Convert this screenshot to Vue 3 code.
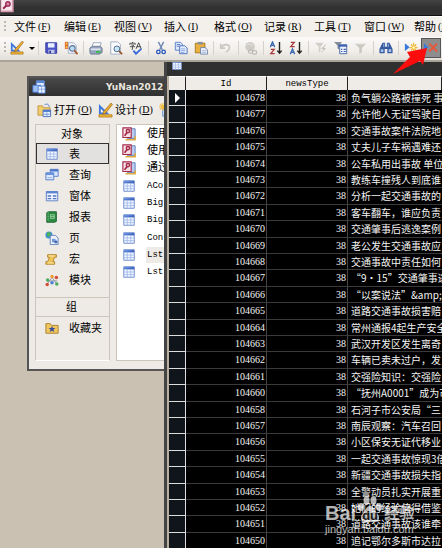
<script setup>
const menus = [
  ['文件', 'F'], ['编辑', 'E'], ['视图', 'V'], ['插入', 'I'], ['格式', 'O'],
  ['记录', 'R'], ['工具', 'T'], ['窗口', 'W'], ['帮助', 'H'],
]
const tools = [
  'save', 'filesearch', '|', 'print', 'preview', 'spell', '|', 'cut', 'copy', 'paste', '|',
  'undo', '|', 'link', '|', 'az', 'za', '|', 'filtersel', 'filterform', 'filter', '|',
  'find', '|', 'newrec', 'delrec',
]
const labels = {
  save: '保存', filesearch: '文件搜索', print: '打印', preview: '打印预览', spell: '拼写检查',
  cut: '剪切', copy: '复制', paste: '粘贴', undo: '撤消', link: '超链接', az: '升序', za: '降序',
  filtersel: '按选定内容筛选', filterform: '按窗体筛选', filter: '应用筛选', find: '查找',
  newrec: '新记录', delrec: '删除记录',
}
const objects = [
  ['table', '表'], ['query', '查询'], ['form', '窗体'], ['report', '报表'],
  ['page', '页'], ['macro', '宏'], ['module', '模块'],
]
const entries = [
  ['wizard', '使用'], ['wizard', '使用'], ['wizard', '通过'],
  ['table', 'ACol'], ['table', 'Bigl'], ['table', 'Bigl'],
  ['table', 'Cons'], ['table', 'Lstl'], ['table', 'Lstl'],
]
const rows = [
  [104678, '负气躺公路被撞死 事'], [104677, '允许他人无证驾驶自'], [104676, '交通事故案件法院地'],
  [104675, '丈夫儿子车祸遇难还'], [104674, '公车私用出事故 单位'], [104673, '教练车撞残人到底谁'],
  [104672, '分析一起交通事故的'], [104671, '客车翻车，谁应负责'], [104670, '交通肇事后逃逸案例'],
  [104669, '老公发生交通事故应'], [104668, '交通事故中责任如何'], [104667, '“9·15”交通肇事逃'],
  [104666, '“以案说法”&amp;n'], [104665, '道路交通事故损害赔'], [104664, '常州通报4起生产安全'],
  [104663, '武汉开发区发生离奇'], [104662, '车辆已卖未过户，发'], [104661, '交强险知识：交强险'],
  [104660, '“抚州A0001”成为市'], [104658, '石河子市公安局“三'], [104657, '南辰观察：汽车召回'],
  [104656, '小区保安无证代移业'], [104655, '一起交通事故惊现3倍'], [104654, '新疆交通事故损失指'],
  [104653, '全警动员扎实开展重'], [104652, '她们的经验值得借鉴'], [104651, '道路交通事故该谁牵'],
  [104650, '追记鄂尔多斯市达拉'],
]
</script>

<template>
  <svg class="defs" aria-hidden="true">
    <defs>
      <linearGradient id="blue" x1="0" y1="0" x2="1" y2="1">
        <stop offset="0" stop-color="#7da4ee" /><stop offset="1" stop-color="#2a4fae" />
      </linearGradient>
      <symbol id="i-design" viewBox="0 0 16 16">
        <path d="M1 1v11h11z" fill="#3f78dc" /><path d="M3 6v4h4z" fill="#f6f2ea" />
        <path d="M14 0l1.500 1.500L8 11l-3 1.500L6 9z" fill="#e8a92c" stroke="#8a5a18" stroke-width=".6" />
        <path d="M1 12.500h14v2.500H1z" fill="#f0b93a" stroke="#a06a10" stroke-width=".7" />
      </symbol>
      <symbol id="i-save" viewBox="0 0 16 16">
        <path d="M2 2h12.500v12H3l-1-1z" fill="#4d52c8" stroke="#30369a" />
        <path d="M4.500 2.500h7.500v5H4.500z" fill="#e6edfb" /><path d="M5 10h7v4H5z" fill="#bfc8e8" /><path d="M6 11h2v3H6z" fill="#30369a" />
      </symbol>
      <symbol id="i-filesearch" viewBox="0 0 16 16">
        <path d="M1 1h4v8H1z" fill="#e0672c" /><path d="M2 2h2v2H2zM2 6h2v2H2z" fill="#f8cf4a" />
        <path d="M5 2h6l3 3v9H5z" fill="#f4f7fd" stroke="#8b9dbf" stroke-width=".8" />
        <circle cx="9.500" cy="8.500" r="3.200" fill="#bcdcf4" stroke="#5c6f8e" stroke-width="1.200" /><path d="M12 11l3.500 4" stroke="#a65a2c" stroke-width="2.200" />
      </symbol>
      <symbol id="i-print" viewBox="0 0 16 16">
        <path d="M5 2h9l-2 6H3z" fill="#fff" stroke="#7889a8" stroke-width=".8" />
        <path d="M1 8l3-2h9l2 2v5l-3 2H2l-1-2z" fill="#96a5bd" stroke="#546582" stroke-width=".8" />
        <path d="M2 8.500h11v2H2z" fill="#dfe6f1" /><path d="M8 11.500h5v2H8z" fill="#36bf44" />
      </symbol>
      <symbol id="i-preview" viewBox="0 0 16 16">
        <path d="M2 1h8l3 3v11H2z" fill="#fbfcff" stroke="#8594ae" stroke-width=".8" />
        <circle cx="9" cy="9" r="3.300" fill="#c9e7f7" stroke="#4e6788" stroke-width="1.100" /><path d="M11.500 11.500L15 15" stroke="#925630" stroke-width="2" />
      </symbol>
      <symbol id="i-spell" viewBox="0 0 16 16">
        <path d="M1 2.500h6M1 2.500v2M7 2.500v2M4 1v1.500M2.500 4.500h3L4 6v3.500H3M1 6.500h6" fill="none" stroke="#333" stroke-width=".9" />
        <path d="M8 9l3-7 3 7M9 6.500h4" fill="none" stroke="#333" stroke-width="1" />
        <path d="M5 11l3 3.500L14 9" fill="none" stroke="#3d6bd8" stroke-width="2.200" />
      </symbol>
      <symbol id="i-cut" viewBox="0 0 16 16">
        <path d="M5 1l4.500 9M11 1L6.500 10" stroke="#6d87b3" stroke-width="1.600" />
        <circle cx="5" cy="12.500" r="2" fill="none" stroke="#2756bd" stroke-width="1.500" /><circle cx="11" cy="12.500" r="2" fill="none" stroke="#2756bd" stroke-width="1.500" />
      </symbol>
      <symbol id="i-copy" viewBox="0 0 16 16">
        <path d="M1.500 1.500h6l2 2v7h-8z" fill="#dfeafd" stroke="#5379c4" /><path d="M3 4h4M3 6h4" stroke="#5379c4" />
        <path d="M6.500 5.500h6l2.500 2.500v6.500H6.500z" fill="#e8f0ff" stroke="#4066b8" /><path d="M8 9h5M8 11h5M8 13h4" stroke="#6c90d8" stroke-width=".8" />
      </symbol>
      <symbol id="i-paste" viewBox="0 0 16 16">
        <path d="M1.500 2.500h11v11h-11z" fill="#e9b140" stroke="#a3731c" /><path d="M4 1h6v3H4z" fill="#8b8f9a" />
        <path d="M7.500 7.500h5l3 2.500v5h-8z" fill="#eef3fd" stroke="#6b7fa8" /><path d="M9 11h5M9 13h5" stroke="#8ea4cf" stroke-width=".8" />
      </symbol>
      <symbol id="i-undo" viewBox="0 0 16 16">
        <path d="M2 3v5h5M2.500 7.500C5 3 12 3 12 7.500c0 3-2 4-4 5.500" fill="none" stroke="#ccc9c3" stroke-width="2" />
      </symbol>
      <symbol id="i-link" viewBox="0 0 16 16">
        <circle cx="7" cy="6.500" r="5.500" fill="#cfccc7" /><path d="M3 5l3-2 3 2 2-1" stroke="#e9e6e1" fill="none" />
        <rect x="5" y="10" width="5" height="4" rx="2" fill="none" stroke="#bbb8b2" stroke-width="1.300" /><rect x="9.500" y="11" width="5" height="4" rx="2" fill="none" stroke="#bbb8b2" stroke-width="1.300" />
      </symbol>
      <symbol id="i-az" viewBox="0 0 16 16">
        <path d="M1.500 7L4 1l2.500 6M2.500 5h3" fill="none" stroke="#3b67ae" stroke-width="1.500" /><path d="M2 9.500h4L2 14.500h4.500" fill="none" stroke="#a83a3a" stroke-width="1.500" />
        <path d="M12 1v12M9.500 11L12 14l2.500-3" fill="none" stroke="#222" stroke-width="1.600" />
      </symbol>
      <symbol id="i-za" viewBox="0 0 16 16">
        <path d="M2 1.500h4L2 6.500h4.500" fill="none" stroke="#a83a3a" stroke-width="1.500" /><path d="M1.500 15L4 9l2.500 6M2.500 13h3" fill="none" stroke="#3b67ae" stroke-width="1.500" />
        <path d="M12 1v12M9.500 11L12 14l2.500-3" fill="none" stroke="#222" stroke-width="1.600" />
      </symbol>
      <symbol id="i-filtersel" viewBox="0 0 16 16">
        <path d="M1 2h10L7.500 6.500V12l-2 1.500v-7z" fill="#d2cfc8" /><path d="M13 4L8 9h3l-3 5 6-6h-3l3-4z" fill="#c5c1ba" />
      </symbol>
      <symbol id="i-filterform" viewBox="0 0 16 16">
        <path d="M0 1h9L6 5v5L4 8.500V5z" fill="#858b98" /><path d="M6.500 4.500h8v10h-8z" fill="#eef3ff" stroke="#3e5f9d" /><path d="M5 4h10v2.500H5z" fill="#3d62b4" />
        <path d="M8 9.500h1.500M11 9.500h2.500M8 12h1.500M11 12h2.500" stroke="#3e5f9d" stroke-width="1.300" />
      </symbol>
      <symbol id="i-filter" viewBox="0 0 16 16"><path d="M1 3h13L9 8v5l-3 1.500V8z" fill="#cbc8c1" /><path d="M4 3.500h8" stroke="#e7e4dd" /></symbol>
      <symbol id="i-find" viewBox="0 0 16 16">
        <path d="M4 2h3v4l1 1 1-1V2h3l3.500 7v5h-6V9h-3v5h-6V9z" fill="#35599e" /><path d="M2 9.500h3v3H2zM11 9.500h3v3h-3z" fill="#a8c4ee" /><path d="M5.500 3v4M10.500 3v4" stroke="#a8c4ee" />
      </symbol>
      <symbol id="i-newrec" viewBox="0 0 16 16">
        <path d="M1 2.500v9L6.500 7z" fill="#3979db" /><path d="M11 2v11M6.500 7.500h9M8 4l6 7M14 4l-6 7" stroke="#f0ba3b" stroke-width="1.500" /><circle cx="11" cy="7.500" r="1.500" fill="#fff5b4" />
      </symbol>
      <symbol id="i-delrec" viewBox="0 0 16 16">
        <path d="M0 2.500v9L5 7z" fill="#3979db" /><path d="M6 3l9 9M15 3l-9 9" stroke="#e4573d" stroke-width="2.200" />
      </symbol>
      <symbol id="i-table" viewBox="0 0 16 16">
        <path d="M2 2h12v12H2z" fill="#f3f7ff" stroke="#6384c8" /><path d="M2 2h12v3H2z" fill="url(#blue)" />
        <path d="M2 8h12M2 11h12M6 5v9M10 5v9" stroke="#a4bce9" />
      </symbol>
      <symbol id="i-query" viewBox="0 0 16 16">
        <path d="M6 1.500h9v8H6z" fill="#d8e6ff" stroke="#4c76c7" /><path d="M6 1.500h9v2.500H6z" fill="#4c76c7" />
        <path d="M1 5.500h9v8H1z" fill="#dce8ff" stroke="#4c76c7" /><path d="M1 5.500h9v2.500H1z" fill="#6a91dc" /><path d="M3 11h5" stroke="#8dacdf" />
      </symbol>
      <symbol id="i-form" viewBox="0 0 16 16">
        <path d="M1.500 3h13v10.500h-13z" fill="#edf3ff" stroke="#5478bf" /><path d="M1.500 2.500h13V5h-13z" fill="#5c84d3" />
        <path d="M3 8h4M9 8h4M3 11h4M9 11h4" stroke="#5478bf" stroke-width="1.500" />
      </symbol>
      <symbol id="i-report" viewBox="0 0 16 16">
        <path d="M2 3l2-1h9v11l-2 1H2z" fill="#2c8b43" stroke="#17602a" /><path d="M6 5h5v5H6z" fill="#a6dba7" /><path d="M7 6.500h3M7 8.500h3" stroke="#2c7d3d" /><path d="M3.500 3v10" stroke="#b7dfb8" stroke-dasharray="1 1" />
      </symbol>
      <symbol id="i-page" viewBox="0 0 16 16">
        <circle cx="4.500" cy="4.500" r="4" fill="#3b8ed0" /><path d="M2 2l3-1 2 2-2 3-2 1z" fill="#4fb35b" />
        <path d="M6 5h6l3 3v7.500H6z" fill="#eaf0fc" stroke="#5e7db9" /><path d="M8 9h4v4H8z" fill="#7598d8" /><path d="M11 11h3v3h-3z" fill="#3e63ae" />
      </symbol>
      <symbol id="i-macro" viewBox="0 0 16 16">
        <path d="M3 3h10v3h-2l-2 5h2v3H1v-3h2l2-5H3z" fill="#edc35a" stroke="#a9761d" stroke-width=".9" /><path d="M4 4.500h7M3 12.500h7" stroke="#fff0b5" />
      </symbol>
      <symbol id="i-module" viewBox="0 0 16 16">
        <path d="M8 5L3 12M8 5l5 7M8 9H3M8 9h6" stroke="#8a94a3" />
        <circle cx="8" cy="4" r="2" fill="#e89c35" /><circle cx="13" cy="5" r="2" fill="#d24e36" /><circle cx="3" cy="8" r="2" fill="#4caa5c" />
        <circle cx="2.500" cy="13" r="2" fill="#d24e36" /><circle cx="8" cy="11" r="2" fill="#4f80d8" /><circle cx="13.500" cy="12.500" r="2" fill="#4caa5c" />
      </symbol>
      <symbol id="i-fav" viewBox="0 0 16 16">
        <path d="M1 3h5l1.500 2H15v9H1z" fill="#f0c75f" stroke="#a87a25" /><path d="M8 5.500l1 2.500h3l-2.300 1.700 1 2.800L8 11l-2.700 1.500 1-2.800L4 8h3z" fill="#3a4f9a" />
      </symbol>
      <symbol id="i-wizard" viewBox="0 0 16 16">
        <path d="M6 2h9v11H6z" fill="#b9cdf2" stroke="#5777b5" /><path d="M4 14.500h11v-4" fill="none" stroke="#e0aa3c" stroke-width="1.800" />
        <path d="M1 1h9.500v11H1z" fill="#f6dfe6" stroke="#a52a48" stroke-width="1.300" /><path d="M3 10l3-4" stroke="#a52a48" stroke-width="2" /><circle cx="6.800" cy="4.700" r="1.900" fill="none" stroke="#a52a48" stroke-width="1.600" />
      </symbol>
      <symbol id="i-open" viewBox="0 0 16 16">
        <path d="M1 3h5l1 2h7v8H1z" fill="#f0cc6a" stroke="#b58a35" stroke-width=".8" /><path d="M8 2c3-2 5 0 5 2" fill="none" stroke="#4b78ca" />
        <path d="M6.500 7.500h8v7h-8z" fill="#e7f0ff" stroke="#4b72bd" /><path d="M6.500 7.500h8v2h-8z" fill="#4b78ca" /><path d="M7 12h7M10.500 10v4" stroke="#7d9ed8" />
      </symbol>
      <symbol id="i-new" viewBox="0 0 16 16">
        <path d="M4 5h11v9H4z" fill="#e7f0ff" stroke="#5a82cc" /><path d="M4 5h11v2H4z" fill="#5a82cc" /><path d="M4 0v8M0 4h8M1 1l6 6M7 1L1 7" stroke="#f0bd3f" stroke-width="1.200" />
      </symbol>
      <symbol id="i-db" viewBox="0 0 16 16">
        <path d="M5 1h9v8H5z" fill="#e5efff" stroke="#5a88d8" /><path d="M5 1h9v2.500H5z" fill="#5a88d8" />
        <path d="M1 6h9v8H1z" fill="#9fbff5" stroke="#4677cf" /><path d="M7 7h8v8H7z" fill="#f3f7ff" stroke="#4677cf" /><path d="M7 10.500h8M11 7v8" stroke="#7fa3e6" />
      </symbol>
    </defs>
  </svg>

  <div class="app">
    <header class="titlebar">
      <svg class="appicon" viewBox="0 0 16 16" aria-hidden="true">
        <path d="M0 0h15v14H0z" fill="#d89ab0" /><path d="M1 0h12v12H1z" fill="#f8e8ee" />
        <path d="M3 10l4-4" stroke="#9a2c58" stroke-width="2.500" /><circle cx="8.500" cy="4.500" r="2.500" fill="#d88aa8" stroke="#9a2c58" stroke-width="1.600" />
      </svg>
    </header>
    <nav class="menubar">
      <span class="grip"></span>
      <button v-for="m in menus" :key="m[1]" class="menu" type="button">{{ m[0] }}<span class="key">(<u>{{ m[1] }}</u>)</span></button>
    </nav>
    <div class="toolbar">
      <span class="grip"></span>
      <button class="tool" type="button" aria-label="设计"><svg><use href="#i-design" /></svg></button>
      <button class="drop" type="button" aria-label="视图列表"></button>
      <span class="sep"></span>
      <template v-for="(t, i) in tools" :key="i">
        <span v-if="t === '|'" class="sep"></span>
        <button v-else class="tool" :class="{ pressed: t === 'delrec' }" type="button" :aria-label="labels[t]"><svg><use :href="'#i-' + t" /></svg></button>
      </template>
    </div>

    <main class="desktop">
      <section class="window database">
        <div class="caption"><svg><use href="#i-db" /></svg><span>YuNan2012</span></div>
        <div class="actions">
          <button type="button"><svg><use href="#i-open" /></svg>打开<span class="key">(<u>O</u>)</span></button>
          <button type="button"><svg><use href="#i-design" /></svg>设计<span class="key">(<u>D</u>)</span></button>
          <button type="button" aria-label="新建"><svg><use href="#i-new" /></svg></button>
        </div>
        <div class="panes">
          <div class="objects">
            <div class="group">对象</div>
            <button v-for="o in objects" :key="o[1]" type="button" :class="{ active: o[0] === 'table' }"><svg><use :href="'#i-' + o[0]" /></svg>{{ o[1] }}</button>
            <div class="group second">组</div>
            <button type="button"><svg><use href="#i-fav" /></svg>收藏夹</button>
          </div>
          <ul class="entries">
            <li v-for="(e, i) in entries" :key="i"><svg><use :href="'#i-' + e[0]" /></svg><span :class="{ current: i === 7 }">{{ e[1] }}</span></li>
          </ul>
        </div>
      </section>

      <section class="window datasheet">
        <div class="caption"><svg><use href="#i-table" /></svg></div>
        <table>
          <thead>
            <tr><th class="selector"></th><th class="num">Id</th><th class="num">newsType</th><th></th></tr>
          </thead>
          <tbody>
            <tr v-for="(r, i) in rows" :key="r[0]">
              <th class="selector"><span v-if="i === 0" class="marker"></span></th>
              <td class="num">{{ r[0] }}</td><td class="num">38</td><td class="title">{{ r[1] }}</td>
            </tr>
          </tbody>
        </table>
      </section>
    </main>

    <svg class="pointer" viewBox="0 0 36 30" aria-hidden="true"><path d="M34 3L14 7l3 5L0 29l27-13 3 4z" fill="#fb0d0d" /></svg>

    <div class="watermark">
      <div class="brand">
        <span>Bai</span>
        <span class="paw">
          <svg viewBox="0 0 24 26" aria-hidden="true"><ellipse cx="3" cy="11" rx="3" ry="4" /><ellipse cx="8.500" cy="4.500" rx="3" ry="4.500" /><ellipse cx="15.500" cy="4.500" rx="3" ry="4.500" /><ellipse cx="21" cy="11" rx="3" ry="4" /><path d="M12 10c4 0 4 4 7 7s3 9-2 9H7c-5 0-5-6-2-9s3-7 7-7z" /></svg>
          <span class="du">du</span>
        </span>
        <span class="cn">经验</span>
      </div>
      <div class="site">jingyan.baidu.com</div>
    </div>
  </div>
</template>

<style>
body { margin: 0; overflow: hidden; }
</style>

<style scoped>
.defs { position: absolute; width: 0; height: 0; }
.app {
  position: relative;
  display: flex;
  flex-direction: column;
  height: 100vh;
  overflow: hidden;
  background: #cbc1b2;
  font-family: "Liberation Serif", "Noto Sans CJK SC", serif;
  font-size: 11px;
  line-height: 16px;
  color: #000;
}
button {
  display: flex;
  align-items: center;
  flex: none;
  margin: 0;
  padding: 0;
  border: 0;
  background: none;
  font: inherit;
  color: inherit;
  white-space: nowrap;
}
.key { font-size: 10px; margin-left: 2px; }
.titlebar {
  height: 15px;
  flex: none;
  background: linear-gradient(#444, #303030 8px, #333);
  border-bottom: 1px solid #111;
}
.appicon { display: block; width: 15px; height: 14px; }
.menubar {
  display: flex;
  align-items: center;
  height: 20px;
  flex: none;
  background: #f3f0ec;
  border-top: 1px solid #fff;
}
.grip {
  flex: none;
  width: 2px;
  height: 12px;
  margin: 0 5px 0 4px;
  background: repeating-linear-gradient(#bdb8b0 0 2px, transparent 2px 4px);
}
.menubar .grip { margin-right: 8px; }
.menu { width: 50px; }
.toolbar {
  display: flex;
  align-items: center;
  height: 22px;
  flex: none;
  padding-bottom: 1px;
  background: linear-gradient(#fbfaf9, #f1eeea 60%, #e2dfda);
}
.toolbar .grip { margin: 0 1px 0 4px; }
.tool { justify-content: center; width: 20px; height: 20px; }
.tool svg { width: 14px; height: 14px; }
.tool.pressed { background: #8d8d8d; box-shadow: inset 0 0 0 1px #555; }
.drop { justify-content: center; width: 9px; height: 20px; }
.drop::before { content: ""; border: 3px solid transparent; border-top-color: #000; border-bottom: 0; }
.sep { flex: none; width: 1px; height: 14px; margin: 0 2px; background: #d5d1ca; }

.desktop { position: relative; flex: 1; min-height: 0; border-top: 2px solid #aaa398; }
.window { position: absolute; overflow: hidden; }
.caption { display: flex; align-items: center; color: #e9e6df; }
.database {
  left: 27px;
  top: 14px;
  width: 170px;
  height: 295px;
  box-sizing: border-box;
  display: flex;
  flex-direction: column;
  border: 2px solid #555;
  background: #eeebe6;
}
.database .caption {
  flex: none;
  height: 18px;
  padding-left: 3px;
  background: linear-gradient(#484848, #303030);
  font: bold 9px/18px "DejaVu Sans", sans-serif;
}
.database .caption svg { width: 14px; height: 14px; margin-right: 60px; }
.actions { display: flex; align-items: center; gap: 6px; height: 28px; flex: none; padding-left: 8px; overflow: hidden; }
.actions svg { width: 15px; height: 15px; margin-right: 2px; }
.panes { display: flex; gap: 6px; flex: 1; min-height: 0; padding: 0 0 8px 6px; }
.objects {
  width: 75px;
  flex: none;
  box-sizing: border-box;
  border: 1px solid #cbc5bb;
  border-bottom-color: #fff;
}
.group { padding-left: 25px; line-height: 18px; }
.group.second { padding-left: 30px; border-top: 1px solid #cbc5bb; border-bottom: 1px solid #cbc5bb; margin: 7px 0 0; }
.objects button { width: 100%; height: 21px; padding-left: 9px; }
.objects button.active { background: #e3e1df; box-shadow: inset 0 0 0 1px #333; }
.objects svg { width: 14px; height: 14px; margin-right: 10px; }
.entries {
  flex: 1;
  margin: 0;
  padding: 0 0 0 5px;
  list-style: none;
  background: #fff;
  border: 1px solid #cbc5bb;
  white-space: nowrap;
  overflow: hidden;
}
.entries li { display: flex; align-items: center; height: 17px; }
.entries li:nth-child(3n) { height: 18px; }
.entries svg { width: 14px; height: 14px; flex: none; margin-right: 10px; }
.entries span { padding-left: 1px; font-family: "Liberation Mono", "Noto Sans CJK SC", monospace; font-size: 9px; }
.entries li:nth-child(-n+3) span { font-size: 11px; }
.entries .current { background: #eeebe6; }

.datasheet {
  left: 164px;
  right: 0;
  top: 0;
  bottom: 0;
  background: #000;
  border-left: 3px solid #444;
}
.datasheet .caption { align-items: flex-start; height: 14px; padding-left: 4px; background: #303030; }
.datasheet .caption svg { width: 12px; height: 12px; margin-top: -3px; }
table {
  width: 100%;
  table-layout: fixed;
  border-collapse: separate;
  border-spacing: 0;
  border-left: 2px solid #b9afa1;
  font-size: 10px;
  line-height: 14px;
}
th, td { padding: 0; box-sizing: border-box; font-weight: normal; white-space: nowrap; overflow: hidden; }
thead th { height: 14px; background: #efece7; border-right: 1px solid #222; border-top: 1px solid #fff; font-family: "Liberation Mono", monospace; font-size: 9px; line-height: 12px; }
.selector { width: 17px; }
.num { width: 81px; }
tbody tr { height: 16px; }
tbody tr:nth-child(5n+2), tbody tr:nth-child(5n+4) { height: 17px; }
tbody td { border-right: 1px solid #444; border-bottom: 1px solid #3a3a3a; color: #f4f4f4; }
tbody .num { text-align: right; padding-right: 1px; }
tbody .selector { background: #10151b; border-right: 1px solid #ddd; border-bottom: 1px solid #ddd; }
tbody .title { padding-left: 3px; border-right: 0; font-family: "Noto Sans CJK SC", sans-serif; }
.marker { display: block; width: 0; margin-left: 6px; border: 5px solid transparent; border-left-color: #fff; border-right: 0; }

.pointer { position: absolute; left: 393px; top: 45px; width: 36px; height: 30px; }
.watermark {
  position: absolute;
  left: 325px;
  top: 495px;
  color: #fff;
  opacity: .7;
  font-family: "Liberation Sans", "Noto Sans CJK SC", sans-serif;
}
.brand { display: flex; align-items: flex-end; height: 28px; font-size: 20px; font-weight: bold; line-height: 20px; }
.paw { display: grid; margin-left: 2px; }
.paw > * { grid-area: 1 / 1; }
.paw svg { width: 24px; height: 28px; fill: #fff; }
.du { align-self: end; justify-self: center; color: #222; font-size: 13px; line-height: 15px; }
.brand .cn { margin-left: 2px; font-size: 15px; }
.site { font-size: 11px; line-height: 12px; }
</style>
